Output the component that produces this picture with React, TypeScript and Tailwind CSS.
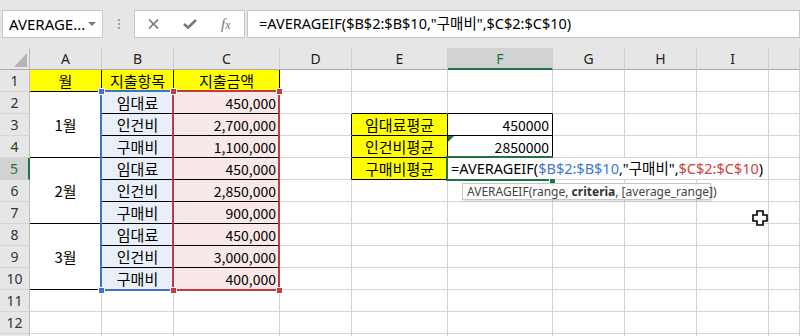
import clsx from "clsx";

type Cell = {
  t?: string;
  a?: "c" | "r";
  bg?: "y" | "b" | "p";
  rb?: boolean;
  bb?: boolean;
  span?: boolean;
  skip?: boolean;
};

const cols = ["A", "B", "C", "D", "E", "F", "G", "H", "I", "J"];
const rows = [1, 2, 3, 4, 5, 6, 7, 8, 9, 10, 11, 12, 13];

const items = ["임대료", "인건비", "구매비"];
const amounts = ["450,000", "2,700,000", "1,100,000", "450,000", "2,850,000", "900,000", "450,000", "3,000,000", "400,000"];

const sheet: Record<string, Cell> = {
  A1: { t: "월", a: "c", bg: "y", rb: true, bb: true },
  B1: { t: "지출항목", a: "c", bg: "y", rb: true, bb: true },
  C1: { t: "지출금액", a: "c", bg: "y", rb: true, bb: true },
  A2: { t: "1월", a: "c", rb: true, bb: true, span: true },
  A5: { t: "2월", a: "c", rb: true, bb: true, span: true },
  A8: { t: "3월", a: "c", rb: true, bb: true, span: true },
  A3: { skip: true },
  A4: { skip: true },
  A6: { skip: true },
  A7: { skip: true },
  A9: { skip: true },
  A10: { skip: true },
  D3: { rb: true },
  D4: { rb: true },
  D5: { rb: true },
  E2: { bb: true },
  F2: { bb: true },
  E3: { t: "임대료평균", a: "c", bg: "y", rb: true, bb: true },
  E4: { t: "인건비평균", a: "c", bg: "y", rb: true, bb: true },
  E5: { t: "구매비평균", a: "c", bg: "y", rb: true, bb: true },
  F3: { t: "450000", a: "r", rb: true, bb: true },
  F4: { t: "2850000", a: "r", rb: true, bb: true },
  F5: { rb: true, bb: true },
};

amounts.forEach((amt, i) => {
  sheet[`B${i + 2}`] = { t: items[i % 3], a: "c", bg: "b", rb: true, bb: true };
  sheet[`C${i + 2}`] = { t: amt, a: "r", bg: "p", rb: true, bb: true };
});

const FormulaBar = () => (
  <div className="h-[48px] bg-[#e6e6e6] flex items-start pt-[10px] pl-[2px]">
    <div className="w-[101px] h-[28px] bg-white border border-[#c6c6c6] flex items-center pl-[6px] pr-[6px] text-[15px] text-black">
      <span className="flex-1">AVERAGE...</span>
      <span className="w-0 h-0 border-l-[4px] border-r-[4px] border-t-[4px] border-l-transparent border-r-transparent border-t-[#7a7a7a]" />
    </div>
    <div className="w-[31px] h-[28px] flex flex-col items-center justify-center gap-[2px]">
      <span className="w-[2px] h-[2px] bg-[#a0a0a0]" />
      <span className="w-[2px] h-[2px] bg-[#a0a0a0]" />
      <span className="w-[2px] h-[2px] bg-[#a0a0a0]" />
    </div>
    <div className="w-[111px] h-[28px] bg-white border border-[#c6c6c6] flex items-center">
      <svg width="11" height="10" viewBox="0 0 11 10" className="ml-[13px]">
        <path d="M1 0.5 L10 9.5 M10 0.5 L1 9.5" stroke="#767676" strokeWidth="1.6" fill="none" />
      </svg>
      <svg width="14" height="10" viewBox="0 0 14 10" className="ml-[24px]">
        <path d="M1 5 L5 8.6 L13 1" stroke="#767676" strokeWidth="2.6" fill="none" />
      </svg>
      <span className="ml-[24px] font-['Liberation_Serif',serif] italic text-[15px] text-[#767676] leading-none">
        f<span className="text-[12px]">x</span>
      </span>
    </div>
    <div className="flex-1 ml-[2px] h-[28px] bg-white border border-[#c6c6c6] flex items-center pl-[11px] text-[14.5px] text-black whitespace-nowrap">
      =AVERAGEIF($B$2:$B$10,"구매비",$C$2:$C$10)
    </div>
  </div>
);

const Corner = () => (
  <div className="flex items-end justify-end pr-[2px] pb-[2px] bg-[#e6e6e6] border-r border-b border-r-[#bdbdbd] border-b-[#ababab]">
    <svg width="13" height="14" viewBox="0 0 13 14">
      <polygon points="13,0 13,14 0,14" fill="#b4b4b4" />
    </svg>
  </div>
);

export default function App() {
  return (
    <div className="w-[800px] h-[336px] overflow-hidden bg-white font-['Noto_Sans','Noto_Sans_CJK_KR',sans-serif]">
      <FormulaBar />
      <div className="relative">
        <div className="grid grid-cols-[30px_72px_72px_106px_72px_96px_105px_72px_72px_72px_31px] grid-rows-[repeat(14,22px)]">
          <Corner />
          {cols.map((c) => (
            <div
              key={c}
              className={clsx(
                "flex items-center justify-center border-r border-r-[#d0d0d0] text-[14px]",
                c === "F"
                  ? "bg-[#d2d2d2] text-[#217346] border-b-2 border-b-[#217346]"
                  : "bg-[#e6e6e6] text-[#222] border-b border-b-[#ababab]"
              )}
            >
              {c === "J" ? "" : c}
            </div>
          ))}
          {rows.map((r) => [
            <div
              key={`h${r}`}
              className={clsx(
                "flex items-center justify-center border-b border-b-[#d4d4d4] text-[14px]",
                r === 5
                  ? "bg-[#d2d2d2] text-[#217346] border-r-2 border-r-[#217346]"
                  : "bg-[#e6e6e6] text-[#333] border-r border-r-[#bdbdbd]"
              )}
            >
              {r < 13 ? r : ""}
            </div>,
            ...cols.map((c) => {
              const cell = sheet[`${c}${r}`] ?? {};
              if (cell.skip) return null;
              return (
                <div
                  key={`${c}${r}`}
                  className={clsx(
                    "flex items-center whitespace-nowrap border-r border-b px-[3px] leading-none text-black font-['Noto_Sans_CJK_KR',sans-serif]",
                    cell.a === "c" ? "justify-center text-[15px]" : "text-[14px]",
                    cell.a === "r" && "justify-end",
                    cell.bg === "y" && "bg-[#ffff00]",
                    cell.bg === "b" && "bg-[#e8eff8]",
                    cell.bg === "p" && "bg-[#f9e8e8]",
                    cell.rb ? "border-r-black" : "border-r-[#d4d4d4]",
                    cell.bb ? "border-b-black" : "border-b-[#d4d4d4]",
                    cell.span && "row-span-3"
                  )}
                >
                  {cell.t}
                </div>
              );
            }),
          ])}
        </div>

        {/* range highlights */}
        <div className="absolute left-[100px] top-[42px] w-[74px] h-[201px] border-2 border-[#3d74c6]" />
        <div className="absolute left-[172px] top-[42px] w-[108px] h-[201px] border-2 border-[#c5393f]" />
        <div className="absolute left-[98px] top-[40px] w-[7px] h-[7px] bg-[#3d74c6] border border-white" />
        <div className="absolute left-[98px] top-[239px] w-[7px] h-[7px] bg-[#3d74c6] border border-white" />
        <div className="absolute left-[170px] top-[40px] w-[7px] h-[7px] bg-[#c5393f] border border-white" />
        <div className="absolute left-[276px] top-[40px] w-[7px] h-[7px] bg-[#c5393f] border border-white" />
        <div className="absolute left-[170px] top-[239px] w-[7px] h-[7px] bg-[#c5393f] border border-white" />
        <div className="absolute left-[276px] top-[239px] w-[7px] h-[7px] bg-[#c5393f] border border-white" />

        {/* error indicator in F4 */}
        <svg className="absolute left-[448px] top-[88px]" width="6" height="6" viewBox="0 0 6 6">
          <polygon points="0,0 6,0 0,6" fill="#217346" />
        </svg>

        {/* active cell F5 being edited */}
        <div className="absolute left-[446px] top-[108px] w-[107px] h-[25px] border-2 border-[#217346]" />
        <div className="absolute left-[549px] top-[129px] w-[7px] h-[7px] bg-[#217346] border border-white" />
        <div className="absolute left-[448px] top-[110px] w-[320px] h-[21px] bg-white flex items-center pl-[3px] text-[14.5px] text-black whitespace-nowrap">
          <span>
            =AVERAGEIF(<span className="text-[#3f78d0]">$B$2:$B$10</span>,"구매비",
            <span className="text-[#d0403f]">$C$2:$C$10</span>)
          </span>
        </div>

        {/* function tooltip */}
        <div className="absolute left-[462px] top-[135px] w-[249px] h-[17px] bg-white border border-[#c6c6c6] shadow-[1px_1px_2px_rgba(0,0,0,0.15)] flex items-center pl-[4px] text-[12px] text-[#444] whitespace-nowrap">
          <span>
            AVERAGEIF(range, <b className="font-bold text-[#333]">criteria</b>, [average_range])
          </span>
        </div>

        {/* cell cursor */}
        <svg className="absolute left-[752px] top-[162px]" width="16" height="16" viewBox="0 0 16 16">
          <polygon
            points="5,1 11,1 11,5 15,5 15,11 11,11 11,15 5,15 5,11 1,11 1,5 5,5"
            fill="white"
            stroke="black"
            strokeWidth="1.6"
          />
        </svg>
      </div>
    </div>
  );
}
